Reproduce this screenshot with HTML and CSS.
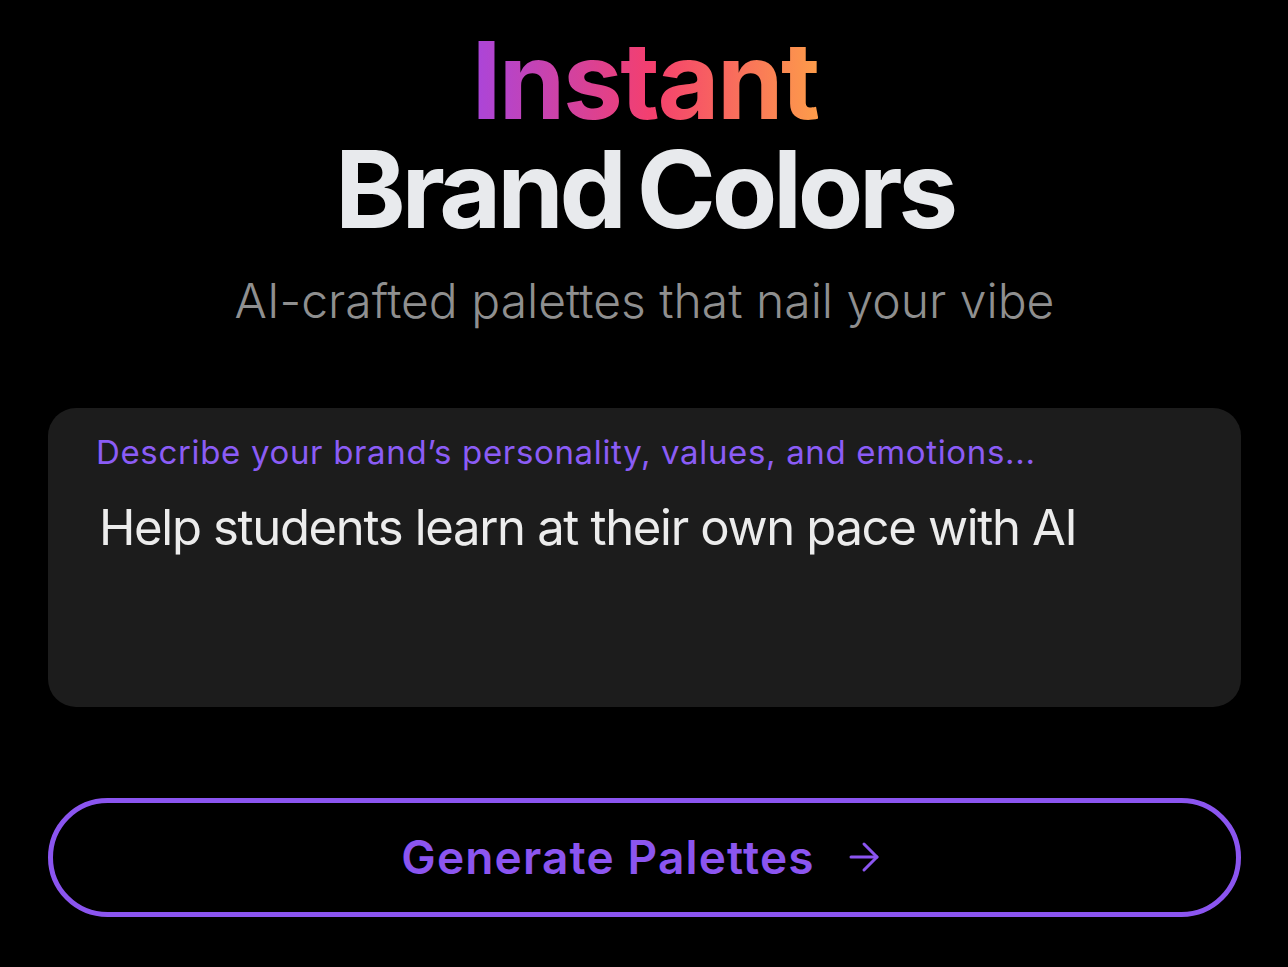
FILE: index.html
```html
<!DOCTYPE html>
<html lang="en">
<head>
  <meta charset="UTF-8" />
  <title>Instant Brand Colors</title>
  <link rel="stylesheet" href="styles.css">
</head>
<body>

  <main class="page">
    <h1 class="title">
      <span class="title-accent">Instant</span>
      <span class="title-main">Brand Colors</span>
    </h1>
    <p class="subtitle">AI-crafted palettes that nail your vibe</p>

    <div class="prompt-card">
      <label class="prompt-label" for="prompt">Describe your brand’s personality, values, and emotions...</label>
      <textarea class="prompt-input" id="prompt" rows="3">Help students learn at their own pace with AI</textarea>
    </div>

    <button class="generate-btn" type="button">
      <span>Generate Palettes</span>
      <svg class="arrow" width="32" height="32" viewBox="0 0 32 32" fill="none" stroke="currentColor" stroke-width="3" stroke-linecap="round" stroke-linejoin="round">
        <path d="M3 16h26"/>
        <path d="M16 3l13 13-13 13"/>
      </svg>
    </button>
  </main>

</body>
</html>
```

FILE: styles.css
```css
body {
  margin: 0;
  background: #000;
  font-family: Inter, "Noto Sans", sans-serif;
  color: #e8eaed;
}
.page {
  display: flex;
  flex-direction: column;
  align-items: center;
  padding: 26px 47px 40px 48px;
}
.title {
  margin: 0;
  display: flex;
  flex-direction: column;
  align-items: center;
  font-size: 107px;
  font-weight: 700;
  line-height: 109px;
  letter-spacing: -0.035em;
}
.title-accent {
  letter-spacing: -0.024em;
  background: linear-gradient(90deg, #a945dc 0%, #f43f6e 52%, #fd9c4a 100%);
  -webkit-background-clip: text;
  background-clip: text;
  color: transparent;
}
.title-main {
  color: #e8eaed;
  letter-spacing: -0.04em;
  word-spacing: -7px;
}
.subtitle {
  margin: 28px 0 0;
  font-size: 48px;
  font-weight: 300;
  line-height: 1.2;
  color: #8f8f8f;
  letter-spacing: 0;
}
.prompt-card {
  box-sizing: border-box;
  width: 100%;
  height: 299px;
  margin-top: 78px;
  padding: 25px 48px 0;
  background: #1c1c1c;
  border-radius: 28px;
  display: flex;
  flex-direction: column;
  gap: 24px;
}
.prompt-label {
  font-size: 33px;
  line-height: 1.2;
  color: #8b5cf6;
  letter-spacing: 0.02em;
}
.prompt-input {
  flex: 1;
  margin: 0;
  padding: 0 0 0 3px;
  border: none;
  outline: none;
  resize: none;
  background: transparent;
  font-family: inherit;
  font-size: 49px;
  line-height: 1.3;
  color: #ececec;
  letter-spacing: -0.027em;
}
.generate-btn {
  box-sizing: border-box;
  width: 100%;
  height: 119px;
  margin-top: 91px;
  padding: 0 8px 0 0;
  display: flex;
  align-items: center;
  justify-content: center;
  gap: 33px;
  background: transparent;
  border: 5px solid #8b55f0;
  border-radius: 60px;
  color: #8b55f0;
  font-family: inherit;
  font-size: 46px;
  font-weight: 600;
  letter-spacing: 0.025em;
  cursor: pointer;
}
.arrow {
  width: 32px;
  height: 32px;
}
```
